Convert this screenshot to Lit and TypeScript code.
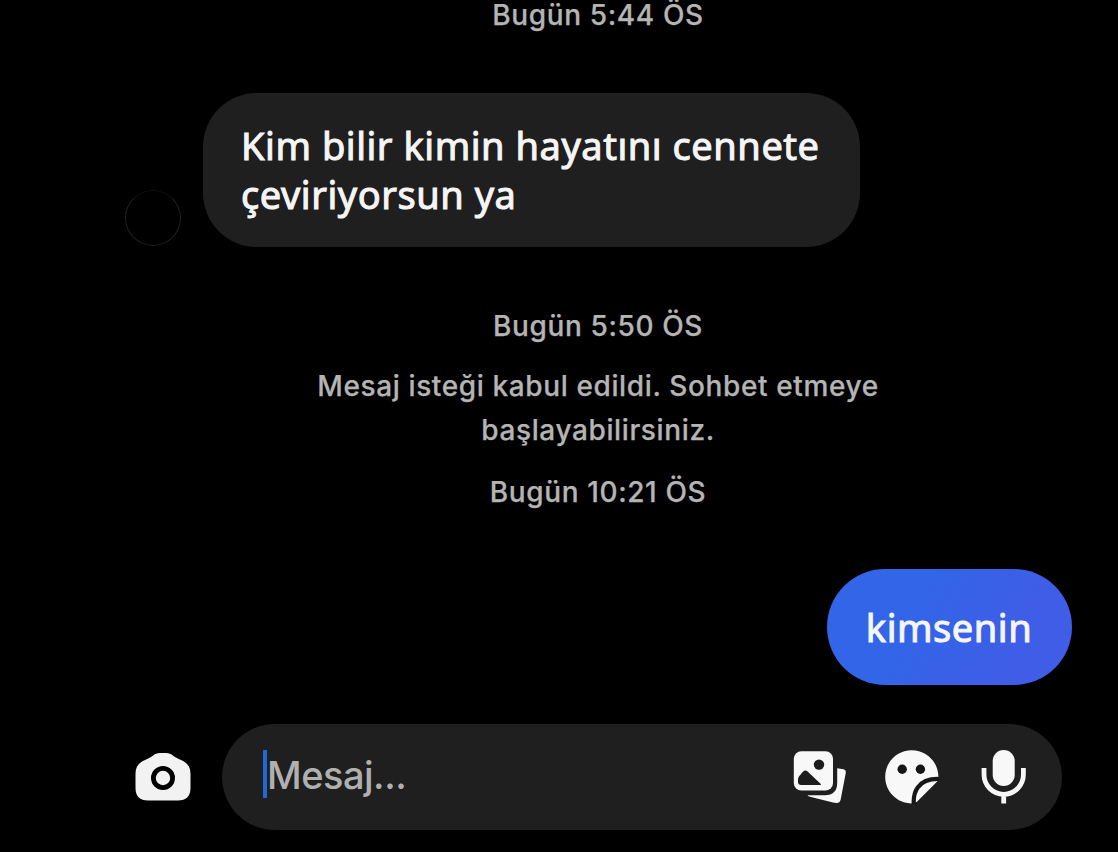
import { LitElement, html, css } from "lit";
import { customElement } from "lit/decorators.js";

const cameraIcon = html`<svg width="56" height="48" viewBox="0 0 56 48">
  <path fill="#f2f2f2" d="M17.500 3C20 .8 22 0 25 0H31C34 0 36 .8 38.500 3C41 5 43.500 5.800 46.500 7.200C52.500 9.800 55.500 14 55.500 20.500V35C55.500 43.500 51 47.500 43 47.500H13C5 47.500 .5 43.500 .5 35V20.500C.5 14 3.500 9.800 9.500 7.200C12.500 5.800 15 5 17.500 3Z"/>
  <circle cx="28" cy="25" r="9.600" fill="none" stroke="#000" stroke-width="4.800"/>
</svg>`;

const galleryIcon = html`<svg width="54" height="54" viewBox="0 0 54 54">
  <rect x=".8" y="1.200" width="39.200" height="39.200" rx="7.500" fill="#f8f8f8"/>
  <circle cx="26" cy="14.600" r="5.200" fill="#1c1c1c"/>
  <path fill="#1c1c1c" d="M5.600 27L9.600 22Q12 19.200 14.600 21.600L27.800 34V35H8Q5.200 34.800 5 32V29.500Q5 28 5.600 27Z"/>
  <path fill="#f8f8f8" d="M44.200 18.200L50.500 19.300Q53.200 20 52.800 22.800L47.700 49.500Q46.800 53.200 43.300 53L40 52.500L17 46.800Q14.500 46 14.500 45.200H32C40 45.200 44.200 41 44.200 33Z"/>
</svg>`;

const stickerIcon = html`<svg width="54" height="54" viewBox="0 0 54 54">
  <path fill="#f8f8f8" d="M53.400 27C53.400 12 41.500 .2 26.700 .2C12 .2 .2 12 .2 26.700C.2 41.500 12 53.200 26.700 53.400Q30.500 53.400 32.200 51.600L52.200 31.400Q53.400 30 53.400 27Z"/>
  <circle cx="17.200" cy="19.300" r="4.700" fill="#161616"/>
  <circle cx="35.400" cy="19.300" r="4.700" fill="#161616"/>
  <path d="M28.800 54.500C28 44 31.500 28.200 54.500 29" fill="none" stroke="#161616" stroke-width="4.200"/>
</svg>`;

const micIcon = html`<svg width="46" height="54" viewBox="0 0 46 54">
  <rect x="11.700" y="0" width="22" height="36" rx="11" fill="#f8f8f8"/>
  <path d="M3 18V24.600A19.700 19.700 0 0 0 42.400 24.600V18M22.700 44.500V53.500" fill="none" stroke="#f8f8f8" stroke-width="4.800"/>
</svg>`;

@customElement("app-root")
export class AppRoot extends LitElement {
  static styles = css`
    :host {
      display: block;
      height: 852px;
      overflow: hidden;
      background: #000;
      font-family: "Inter", "Liberation Sans", sans-serif;
    }
    .screen {
      display: flex;
      flex-direction: column;
      height: 852px;
      box-sizing: border-box;
      padding: 0 46px 22px 125px;
      overflow: hidden;
    }
    .note {
      margin-right: 1px;
      color: #b4b4b4;
      font-size: 28px;
      font-weight: 500;
      line-height: 44px;
      letter-spacing: 0.62px;
      text-align: center;
      white-space: nowrap;
      -webkit-text-stroke: 0.25px #b4b4b4;
    }
    .first {
      margin-top: -7px;
    }
    .second {
      margin-top: 57px;
    }
    .accepted {
      margin-top: 16px;
    }
    .third {
      margin-top: 18px;
    }
    .incoming {
      display: flex;
      align-items: flex-end;
      gap: 22px;
      margin-top: 56px;
    }
    .avatar {
      width: 56px;
      height: 56px;
      margin-bottom: 1px;
      box-sizing: border-box;
      border: 1px solid #1f1f1f;
      border-top-color: #0e0e0e;
      border-radius: 50%;
    }
    .bubble {
      box-sizing: border-box;
      color: #f5f5f5;
      font-family: "Noto Sans", "Inter", sans-serif;
      font-size: 38px;
      line-height: 49px;
      letter-spacing: 0.54px;
      white-space: nowrap;
      -webkit-text-stroke: 1px #f5f5f5;
    }
    .grey {
      width: 657px;
      height: 154px;
      padding: 28px 0 0 38px;
      border-radius: 54px;
      background: #1f1f1f;
    }
    .blue {
      align-self: flex-end;
      width: 245px;
      height: 116px;
      margin-top: 55px;
      padding-top: 34px;
      padding-right: 1px;
      border-radius: 58px;
      background: linear-gradient(115deg, #3265e8 35%, #3f5de6 75%);
      text-align: center;
    }
    .bar {
      display: flex;
      align-items: center;
      margin-top: auto;
      padding-left: 10px;
    }
    .field {
      display: flex;
      align-items: center;
      width: 840px;
      height: 106px;
      margin: 0 0 0 31px;
      box-sizing: border-box;
      padding: 0 35px 0 41px;
      border-radius: 53px;
      background: #1f1f1f;
    }
    .caret {
      width: 4px;
      height: 48px;
      margin-bottom: 6px;
      background: #2168d4;
    }
    .placeholder {
      flex: 1;
      margin-bottom: 3px;
      color: #b0b0b0;
      font-size: 38px;
      font-weight: 500;
      line-height: 49px;
      letter-spacing: -0.5px;
    }
    .icons {
      display: flex;
      align-items: center;
      gap: 38px;
    }
    .icons .mic {
      margin-left: 4px;
    }
    .mic,
    .icon {
      display: flex;
    }
  `;

  render() {
    return html`
      <main class="screen">
        <div class="note first">Bugün 5:44 ÖS</div>
        <div class="incoming">
          <div class="avatar"></div>
          <div class="bubble grey">Kim bilir kimin hayatını cennete<br />çeviriyorsun ya</div>
        </div>
        <div class="note second">Bugün 5:50 ÖS</div>
        <div class="note accepted">Mesaj isteği kabul edildi. Sohbet etmeye<br />başlayabilirsiniz.</div>
        <div class="note third">Bugün 10:21 ÖS</div>
        <div class="bubble blue">kimsenin</div>
        <div class="bar">
          <span class="icon">${cameraIcon}</span>
          <div class="field">
            <span class="caret"></span>
            <span class="placeholder">Mesaj...</span>
            <div class="icons">
              <span class="icon">${galleryIcon}</span>
              <span class="icon">${stickerIcon}</span>
              <span class="mic">${micIcon}</span>
            </div>
          </div>
        </div>
      </main>
    `;
  }
}
